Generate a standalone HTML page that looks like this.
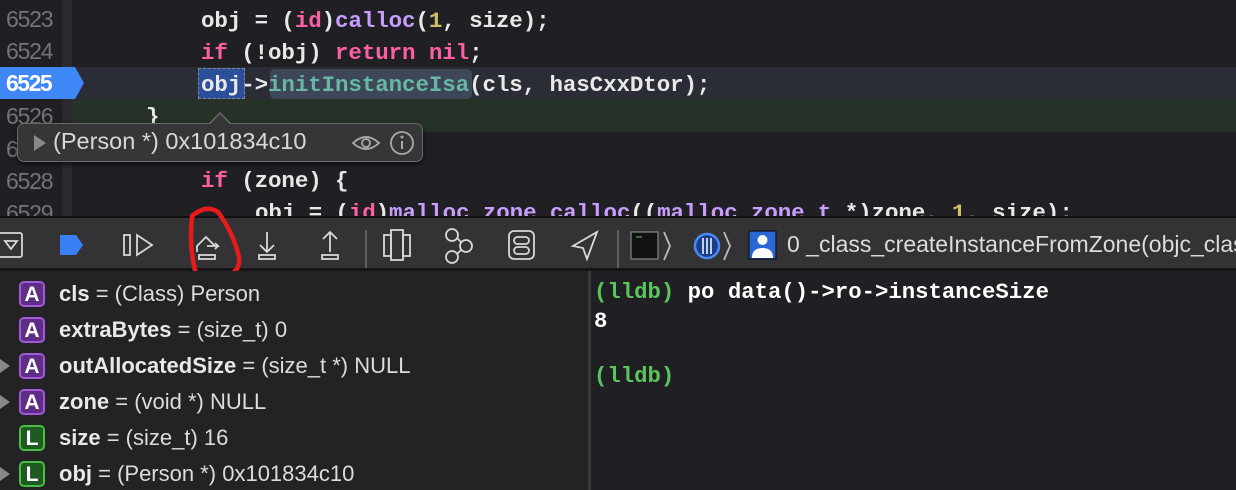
<!DOCTYPE html>
<html><head><style>
*{margin:0;padding:0;box-sizing:border-box}
body{width:1236px;height:490px;overflow:hidden;background:#1f1f24;font-family:"Liberation Sans",sans-serif;position:relative}
.ed{position:absolute;left:0;top:0;width:1236px;height:216px;background:#1f1f24;overflow:hidden}
.gut{position:absolute;left:0;top:0;width:62px;height:216px;background:#1f1f24}
.bar{position:absolute;left:62px;top:0;width:10px;height:216px;background:#2a2a2e}
.ln{position:absolute;left:6px;width:56px;font:23px "Liberation Sans",sans-serif;color:#747478;letter-spacing:-1.2px}
.code{position:absolute;font:bold 22.5px/1 "Liberation Mono",monospace;color:#e8e8e8;white-space:pre;letter-spacing:-0.1px}
.k{color:#fc5fa3}.f{color:#c89dfb}.n{color:#d0bf69}.m{color:#67b7a4}
.tb{position:absolute;left:0;top:216px;width:1236px;height:55px;background:#333335;border-top:2px solid #111;border-bottom:3px solid #151515}
.vars{position:absolute;left:0;top:271px;width:588px;height:219px;background:#232325}
.con{position:absolute;left:588px;top:271px;width:648px;height:219px;background:#1f1f24;border-left:3px solid #3a3a3c}
.row{position:absolute;left:0;height:30px;font-size:22px;color:#dcdcdc;white-space:nowrap}
.bd{position:absolute;left:19px;top:2px;width:26px;height:26px;border-radius:5px;color:#fff;font-weight:bold;font-size:21px;text-align:center;line-height:23px}
.A{background:#5e2d86;border:2px solid #a25ad8}
.L{background:#1f5a22;border:2px solid #4bbd45}
.tx{position:absolute;left:59px;top:2px}
.tx b{color:#e8e8e8}
.tri{position:absolute;left:0;top:8px;width:0;height:0;border-left:10px solid #888;border-top:7px solid transparent;border-bottom:7px solid transparent}
.cl{position:absolute;left:3px;font:bold 22.3px "Liberation Mono",monospace;color:#fff;white-space:pre}
.g{color:#5bc45b}
</style></head><body>
<div class="ed">
<div class="gut"></div><div class="bar"></div>
<div style="position:absolute;left:72px;top:67px;width:1164px;height:32px;background:#2b2d36"></div>
<div style="position:absolute;left:72px;top:99px;width:1164px;height:33px;background:#263127"></div>
<div style="position:absolute;left:0;top:67px;width:84px;height:32px;background:#3f86f6;clip-path:polygon(0 0,75px 0,84px 16px,75px 32px,0 32px)"></div>
<div class="ln" style="top:6px">6523</div>
<div class="ln" style="top:38px">6524</div>
<div class="ln" style="top:70px;color:#fff;font-weight:bold;letter-spacing:-1.5px">6525</div>
<div class="ln" style="top:103px">6526</div>
<div class="ln" style="top:136px">6527</div>
<div class="ln" style="top:168px">6528</div>
<div class="ln" style="top:200px">6529</div>
<div style="position:absolute;left:198px;top:68px;width:47px;height:31px;background:#2c4f9c;border:1px dashed #888"></div>
<div style="position:absolute;left:270px;top:69px;width:202px;height:30px;background:#3e4757;border-radius:5px"></div>
<div class="code" style="left:201px;top:10px">obj = (<span class="k">id</span>)<span class="f">calloc</span>(<span class="n">1</span>, size);</div>
<div class="code" style="left:201px;top:42px"><span class="k">if</span> (!obj) <span class="k">return nil</span>;</div>
<div class="code" style="left:201px;top:74px">obj-><span class="m">initInstanceIsa</span>(cls, hasCxxDtor);</div>
<div class="code" style="left:146px;top:106px">}</div>
<div class="code" style="left:201px;top:170px"><span class="k">if</span> (zone) {</div>
<div class="code" style="left:255px;top:202px">obj = (<span class="k">id</span>)<span class="f">malloc_zone_calloc</span>((<span class="f">malloc_zone_t</span> *)zone, <span class="n">1</span>, size);</div>
<div style="position:absolute;left:17px;top:123px;width:406px;height:39px;background:#363638;border:1px solid #6a6a6c;border-radius:7px;box-shadow:0 2px 6px rgba(0,0,0,.6)"></div>
<div style="position:absolute;left:208px;top:112px;width:0;height:0;border-left:12px solid transparent;border-right:12px solid transparent;border-bottom:12px solid #6a6a6c"></div>
<div style="position:absolute;left:209px;top:114px;width:0;height:0;border-left:11px solid transparent;border-right:11px solid transparent;border-bottom:11px solid #363638"></div>
<div style="position:absolute;left:34px;top:135px;border-left:12px solid #888;border-top:8px solid transparent;border-bottom:8px solid transparent"></div>
<div style="position:absolute;left:53px;top:128px;font-size:23.5px;color:#d8d8d8;white-space:nowrap">(Person *) 0x101834c10</div>
<svg style="position:absolute;left:350px;top:129px" width="70" height="28"><path d="M3 14 Q16 2 29 14 Q16 26 3 14Z" fill="none" stroke="#aaa" stroke-width="1.8"/><circle cx="16" cy="14" r="4" fill="none" stroke="#aaa" stroke-width="1.8"/><circle cx="52" cy="14" r="11" fill="none" stroke="#aaa" stroke-width="1.8"/><circle cx="52" cy="8" r="1.5" fill="#aaa"/><path d="M52 12V20" stroke="#aaa" stroke-width="2"/></svg>
</div>
<div class="tb">
<svg width="1236" height="50" style="position:absolute;left:0;top:0" fill="none" stroke="#d8d8d8" stroke-width="1.8">
<rect x="-4" y="15" width="26" height="24" rx="2"/><path d="M5 23h12l-6 8z"/>
<path d="M60 17h16l7 10-7 10H60z" fill="#3b7ff5" stroke="none"/>
<rect x="124" y="17" width="6" height="20"/><path d="M137 17v20l15-10z"/>
<path d="M197 34V28l9-9 9 9M207 28h11l-3-3M218 28l-3 3"/><rect x="199" y="37" width="16" height="4"/>
<path d="M267 14v19M260 27l7 7 7-7"/><rect x="259" y="37" width="16" height="4"/>
<path d="M330 34V15M323 21l7-7 7 7"/><rect x="322" y="37" width="16" height="4"/>
<path d="M366 12v38" stroke="#666"/>
<rect x="384" y="17" width="7" height="21"/><rect x="391" y="12" width="12" height="30"/><rect x="403" y="17" width="7" height="21"/>
<circle cx="452" cy="17" r="6"/><circle cx="452" cy="39" r="6"/><circle cx="466" cy="28" r="6"/><path d="M457 20l4 4M457 36l4-4"/>
<rect x="509" y="13" width="25" height="28" rx="5"/><rect x="514" y="19" width="15" height="7" rx="3.5"/><rect x="514" y="29" width="15" height="7" rx="3.5"/>
<path d="M597 14L573 28l10 2 4 11z"/>
<path d="M618 12v38" stroke="#666"/>
<rect x="631" y="14" width="27" height="27" fill="#111" stroke="#888" stroke-width="1.2"/><path d="M636 19h6" stroke="#5c5" stroke-width="1"/>
<path d="M664 14l6 14-6 14M724 14l6 14-6 14" stroke="#bbb"/>
<circle cx="707" cy="28" r="12" fill="#1a3d8a" stroke="#4a8af5" stroke-width="2.5"/><path d="M703 20v16M707 20v16M711 20v16" stroke="#fff" stroke-width="1.5"/>
<rect x="749" y="13" width="27" height="28" fill="#2a66d6" stroke="#111" stroke-width="1.2"/><circle cx="762.5" cy="22" r="5" fill="#fff" stroke="none"/><path d="M752 40q0-10 10.5-10t10.5 10z" fill="#fff" stroke="none"/>
</svg>
<div style="position:absolute;left:787px;top:13px;font-size:23px;color:#dcdcdc;white-space:nowrap">0 _class_createInstanceFromZone(objc_class</div>
</div>
<svg style="position:absolute;left:178px;top:202px" width="75" height="82"><path d="M14 14 Q28 2 40 10 Q55 30 61 55 Q63 72 44 74 Q22 80 17 68 Q11 45 14 14" fill="none" stroke="#e81b1b" stroke-width="4.5" stroke-linecap="round"/></svg>
<div class="vars">
<div class="row" style="top:8px"><div class="bd A">A</div><div class="tx"><b>cls</b> = (Class) Person</div></div>
<div class="row" style="top:44px"><div class="bd A">A</div><div class="tx"><b>extraBytes</b> = (size_t) 0</div></div>
<div class="row" style="top:80px"><div class="tri"></div><div class="bd A">A</div><div class="tx"><b>outAllocatedSize</b> = (size_t *) NULL</div></div>
<div class="row" style="top:116px"><div class="tri"></div><div class="bd A">A</div><div class="tx"><b>zone</b> = (void *) NULL</div></div>
<div class="row" style="top:152px"><div class="bd L">L</div><div class="tx"><b>size</b> = (size_t) 16</div></div>
<div class="row" style="top:188px"><div class="tri"></div><div class="bd L">L</div><div class="tx"><b>obj</b> = (Person *) 0x101834c10</div></div>
</div>
<div class="con">
<div class="cl" style="top:8px;left:3px"><span class="g">(lldb)</span> po data()->ro->instanceSize</div>
<div class="cl" style="top:37px">8</div>
<div class="cl" style="top:92px"><span class="g">(lldb)</span></div>
</div>
</body></html>
